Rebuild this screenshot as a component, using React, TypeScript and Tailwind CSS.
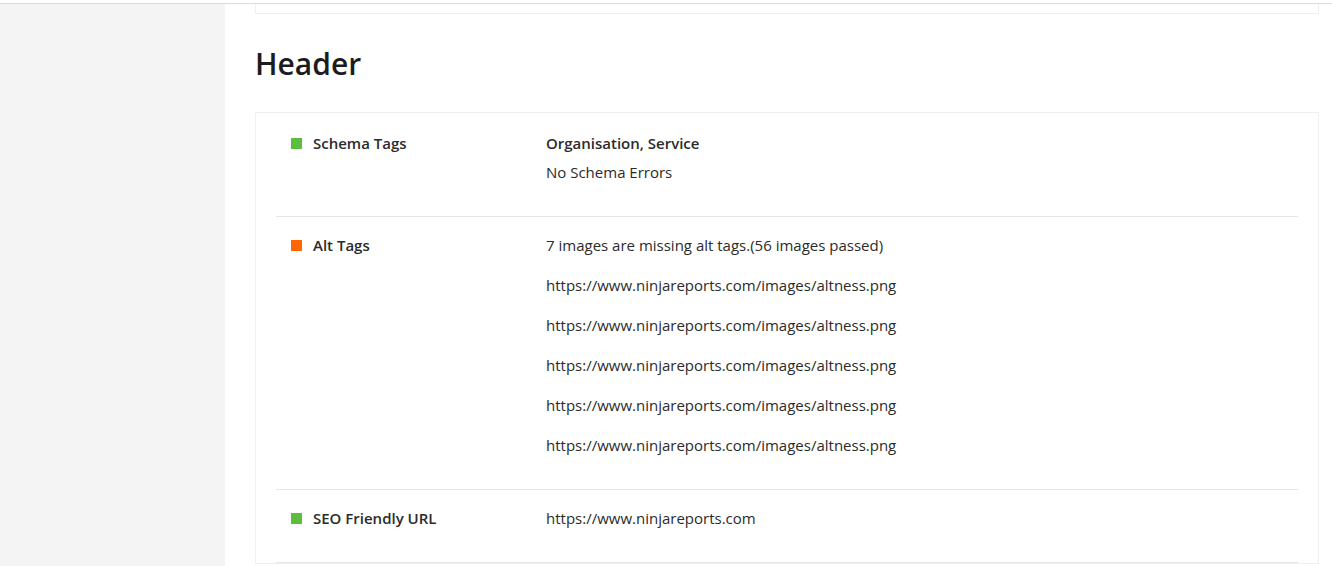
import React from 'react';

type Row = {
  label: string;
  status: 'good' | 'warn';
  bold?: string;
  lines: string[];
  gap: string;
  pad: string;
};

const url = 'https://www.ninjareports.com/images/altness.png';

const rows: Row[] = [
  {
    label: 'Schema Tags',
    status: 'good',
    bold: 'Organisation, Service',
    lines: ['No Schema Errors'],
    gap: 'gap-[7px]',
    pad: 'pt-[19px] pb-[33px]',
  },
  {
    label: 'Alt Tags',
    status: 'warn',
    lines: ['7 images are missing alt tags.(56 images passed)', url, url, url, url, url],
    gap: 'gap-[18px]',
    pad: 'pt-[17px] pb-[33px]',
  },
  {
    label: 'SEO Friendly URL',
    status: 'good',
    lines: ['https://www.ninjareports.com'],
    gap: 'gap-[18px]',
    pad: 'pt-[17px] pb-[33px]',
  },
];

const App: React.FC = () => {
  return (
    <div className="min-h-[566px] flex flex-col bg-white text-[#2b2b2b] font-['Open_Sans',sans-serif]">
      <div className="h-[4px] bg-white border-b border-[#dcdcdc]" />
      <div className="flex flex-1">
        {/* Sidebar */}
        <div className="w-[225px] bg-[#f4f4f4] shrink-0" />

        {/* Main */}
        <div className="flex-1 pl-[30px] pr-[13px]">
          <div className="h-[10px] border-x border-b border-[#efefef]" />

          <h2 className="mt-[30px] text-[30px] leading-[40px] font-semibold text-[#1c1c1c]">Header</h2>

          <div className="mt-[28px] border border-[#efefef] px-[20px]">
            {rows.map((row) => (
              <div key={row.label} className={`flex border-b border-[#e6e6e6] pl-[15px] ${row.pad}`}>
                <div className="w-[255px] shrink-0 flex items-center gap-[11px] h-[22px]">
                  <span className={`w-[11px] h-[11px] ${row.status === 'good' ? 'bg-[#5cbf3b]' : 'bg-[#ff6600]'}`} />
                  <span className="text-[15px] font-semibold">{row.label}</span>
                </div>
                <div className={`flex flex-col ${row.gap} text-[15px] leading-[22px]`}>
                  {row.bold && <div className="font-semibold">{row.bold}</div>}
                  {row.lines.map((l, i) => (
                    <div key={i}>{l}</div>
                  ))}
                </div>
              </div>
            ))}
          </div>
        </div>
      </div>
    </div>
  );
};

export default App;
